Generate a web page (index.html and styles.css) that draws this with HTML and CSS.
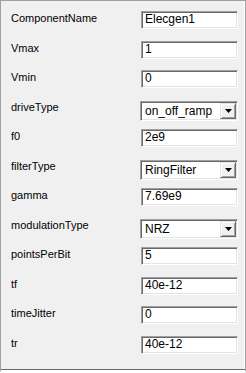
FILE: index.html
```html
<!DOCTYPE html>
<html>
<head>
<meta charset="utf-8">
<link rel="stylesheet" href="styles.css">
</head>
<body>
<div class="panel">
  <div class="row"><span class="label">ComponentName</span><span class="field">Elecgen1</span></div>
  <div class="row"><span class="label">Vmax</span><span class="field">1</span></div>
  <div class="row"><span class="label">Vmin</span><span class="field">0</span></div>
  <div class="row"><span class="label">driveType</span><span class="combo"><span class="combo-text">on_off_ramp</span><span class="combo-btn"><svg width="7" height="4" viewBox="0 0 7 4"><path d="M0 0H7L3.5 4Z" fill="#000"/></svg></span></span></div>
  <div class="row"><span class="label">f0</span><span class="field">2e9</span></div>
  <div class="row"><span class="label">filterType</span><span class="combo"><span class="combo-text">RingFilter</span><span class="combo-btn"><svg width="7" height="4" viewBox="0 0 7 4"><path d="M0 0H7L3.5 4Z" fill="#000"/></svg></span></span></div>
  <div class="row"><span class="label">gamma</span><span class="field">7.69e9</span></div>
  <div class="row"><span class="label">modulationType</span><span class="combo"><span class="combo-text">NRZ</span><span class="combo-btn"><svg width="7" height="4" viewBox="0 0 7 4"><path d="M0 0H7L3.5 4Z" fill="#000"/></svg></span></span></div>
  <div class="row"><span class="label">pointsPerBit</span><span class="field">5</span></div>
  <div class="row"><span class="label">tf</span><span class="field">40e-12</span></div>
  <div class="row"><span class="label">timeJitter</span><span class="field">0</span></div>
  <div class="row"><span class="label">tr</span><span class="field">40e-12</span></div>
</div>
</body>
</html>
```
FILE: styles.css
```css
html, body {
  margin: 0;
  padding: 0;
  background: #f0f0f0;
}
.panel {
  box-sizing: border-box;
  width: 246px;
  height: 373px;
  background: #f0f0f0;
  border-top: 1px solid #a0a0a0;
  border-left: 1px solid #a0a0a0;
  border-right: 1px solid #a0a0a0;
  border-bottom: 3px solid #ffffff;
  box-shadow: inset 0 -1px 0 #696969, inset -1px 0 0 #ffffff;
  padding: 10px 0 0 10px;
  font-family: "Liberation Sans", Arial, sans-serif;
  font-size: 11px;
  color: #000;
}
.row {
  display: flex;
  align-items: flex-start;
  height: 30px;
}
.row:nth-child(2n) {
  height: 29px;
}
.label {
  width: 130px;
  line-height: 12px;
  padding-top: 1px;
}
.field {
  box-sizing: border-box;
  width: 97px;
  height: 18px;
  background: #fff;
  border-top: 1px solid #a0a0a0;
  border-left: 1px solid #a0a0a0;
  border-right: 1px solid #fff;
  border-bottom: 1px solid #fff;
  box-shadow: inset 1px 1px 0 #696969, inset -1px -1px 0 #e3e3e3;
  padding: 1px 0 0 3px;
  font-size: 12px;
  line-height: 12px;
}
.combo {
  box-sizing: border-box;
  display: flex;
  align-items: flex-start;
  width: 98px;
  height: 20px;
  margin-left: -1px;
  margin-top: 1px;
  background: #fff;
  border-top: 1px solid #a0a0a0;
  border-left: 1px solid #a0a0a0;
  border-right: 1px solid #fff;
  border-bottom: 1px solid #fff;
  box-shadow: inset 1px 1px 0 #696969, inset -1px -1px 0 #e3e3e3;
  padding: 1px;
}
.combo-text {
  flex: 1;
  padding: 2px 0 0 3px;
  font-size: 12px;
  line-height: 12px;
}
.combo-btn {
  box-sizing: border-box;
  width: 16px;
  height: 16px;
  background: #f0f0f0;
  border-top: 1px solid #e3e3e3;
  border-left: 1px solid #e3e3e3;
  border-right: 1px solid #696969;
  border-bottom: 1px solid #696969;
  box-shadow: inset 1px 1px 0 #fff, inset -1px -1px 0 #a0a0a0;
  display: flex;
  align-items: center;
  justify-content: center;
}
```
